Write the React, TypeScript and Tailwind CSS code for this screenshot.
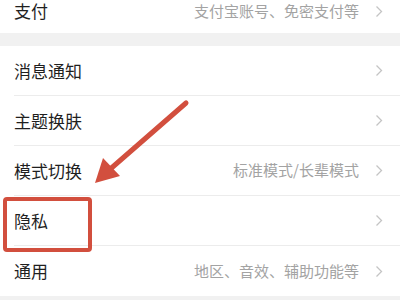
import React from "react";

interface Row {
  label: string;
  hint?: string;
}

const rows: Row[] = [
  { label: "消息通知" },
  { label: "主题换肤" },
  { label: "模式切换", hint: "标准模式/长辈模式" },
  { label: "隐私" },
  { label: "通用", hint: "地区、音效、辅助功能等" },
];

function Chevron() {
  return (
    <svg width="8" height="13" viewBox="0 0 8 13" className="shrink-0">
      <path d="M1.5 1.5 L6.5 6.5 L1.5 11.5" fill="none" stroke="#c4c4c4" strokeWidth="1.3" />
    </svg>
  );
}

function SettingRow({ label, hint, last }: Row & { last?: boolean }) {
  return (
    <div className="pl-[14px] bg-white">
      <div className={`h-[50px] flex items-center pr-[17px] ${last ? "" : "border-b border-[#ececec]"}`}>
        <span className="text-[17px] text-[#1f1f1f]">{label}</span>
        <span className="ml-auto mr-[16px] text-[15px] text-[#a3a3a3]">{hint}</span>
        <Chevron />
      </div>
    </div>
  );
}

export default function App() {
  return (
    <div
      className="relative w-[400px] h-[300px] overflow-hidden bg-white"
      style={{ fontFamily: '"Noto Sans CJK SC", "Noto Sans", sans-serif' }}
    >
      <div className="h-[33px] pb-[11px] pl-[14px] pr-[17px] flex items-center">
        <span className="text-[17px] text-[#1f1f1f]">支付</span>
        <span className="ml-auto mr-[16px] text-[15px] text-[#a3a3a3]">支付宝账号、免密支付等</span>
        <Chevron />
      </div>
      <div className="h-[13px] bg-[#f1f1f1]" />
      {rows.map((r, i) => (
        <SettingRow key={r.label} {...r} last={i === rows.length - 1} />
      ))}
      <div className="h-[10px] bg-[#f1f1f1]" />

      {/* annotation: red box + arrow */}
      <div className="absolute left-[3px] top-[197px] w-[89px] h-[55px] border-[4px] border-[#d24f3e] rounded-[4px]" />
      <svg className="absolute left-0 top-0" width="400" height="300" viewBox="0 0 400 300">
        <line x1="186" y1="103" x2="108" y2="171" stroke="#d24f3e" strokeWidth="5" strokeLinecap="round" />
        <polygon points="95,183 103,158 120,176" fill="#d24f3e" />
      </svg>
    </div>
  );
}
